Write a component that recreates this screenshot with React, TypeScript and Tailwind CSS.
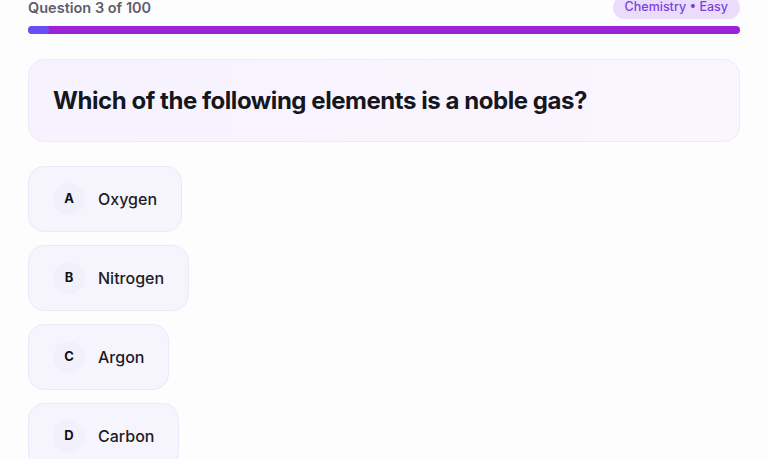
const options = [
  { letter: "A", label: "Oxygen" },
  { letter: "B", label: "Nitrogen" },
  { letter: "C", label: "Argon" },
  { letter: "D", label: "Carbon" },
];

const App = () => {
  const progress = 3;

  return (
    <div
      className="min-h-screen bg-[#fdfdfe] px-7 overflow-hidden"
      style={{ fontFamily: "Inter, 'Noto Sans', sans-serif" }}
    >
      <div className="-mt-[4px] flex items-center justify-between">
        <span className="text-[14.5px] font-semibold text-[#5d5d6c]">
          Question 3 of 100
        </span>
        <span className="rounded-full bg-[#ebdcfc] px-3 py-[2px] text-[12.5px] font-medium text-[#7b3fe0]">
          Chemistry • Easy
        </span>
      </div>

      <div className="mt-[7px] h-2 w-full overflow-hidden rounded-full bg-[#9c24d8]">
        <div
          className="h-full rounded-full bg-[#6b4ef0]"
          style={{ width: `${progress}%` }}
        />
      </div>

      <div className="mt-[25px] rounded-2xl border border-[#efe8fb] bg-gradient-to-r from-[#f7f3fe] to-[#faf5fe] px-6 py-[26px]">
        <h1 className="text-[24px] font-bold leading-[29px] tracking-[-0.45px] text-[#16161e]">
          Which of the following elements is a noble gas?
        </h1>
      </div>

      <div className="mt-[24px] flex flex-col items-start gap-[13px]">
        {options.map((o) => (
          <button
            key={o.letter}
            className="flex h-[66px] items-center gap-[13px] rounded-2xl border border-[#ebe9f7] bg-[#f6f5fd] pl-6 pr-6"
          >
            <span className="flex h-8 w-8 items-center justify-center rounded-full bg-[#f1f0fb] text-[13px] font-bold text-[#111118]">
              {o.letter}
            </span>
            <span className="text-[16px] font-medium text-[#1c1c28]">
              {o.label}
            </span>
          </button>
        ))}
      </div>
    </div>
  );
};

export default App;
